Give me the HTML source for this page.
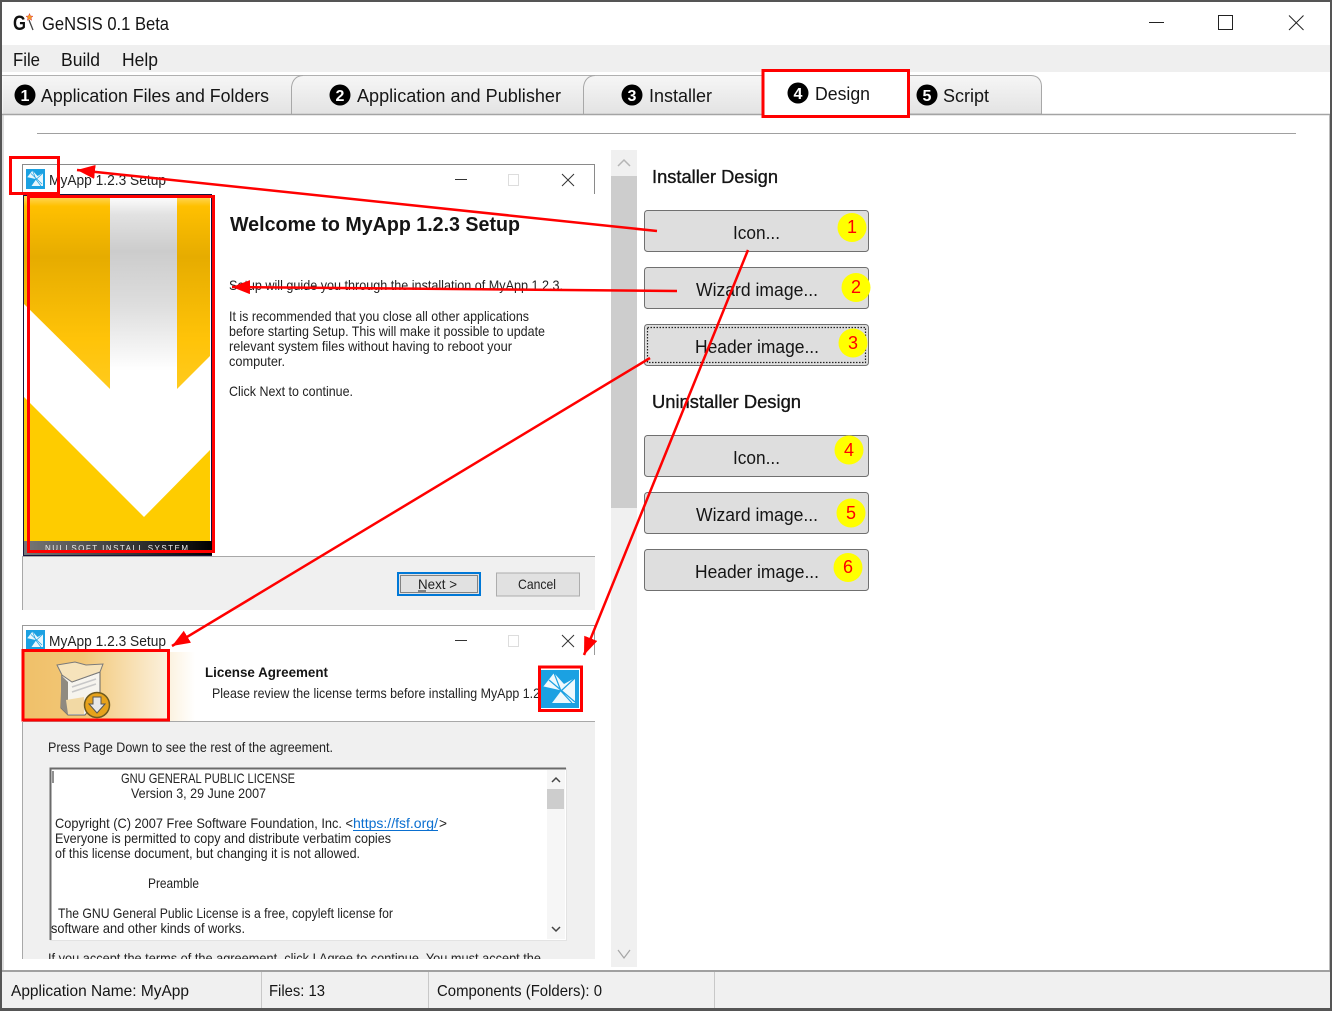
<!DOCTYPE html>
<html lang="en">
<head>
<meta charset="utf-8">
<title>GeNSIS 0.1 Beta</title>
<style>
html,body{margin:0;padding:0;background:#fff;width:1332px;height:1011px;overflow:hidden}
svg{display:block}
text{font-family:"Liberation Sans",sans-serif;fill:#151515}
.ui{font-size:18px}
.s{font-size:14px;fill:#222}
.r{font-size:18px;fill:#f00}
</style>
</head>
<body>
<svg width="1332" height="1011" viewBox="0 0 1332 1011" xmlns="http://www.w3.org/2000/svg">
<defs>
<linearGradient id="tab" x1="0" y1="0" x2="0" y2="1"><stop offset="0" stop-color="#f6f6f6"/><stop offset="1" stop-color="#e3e3e3"/></linearGradient>
<linearGradient id="yel" gradientUnits="userSpaceOnUse" x1="0" y1="196" x2="0" y2="400"><stop offset="0" stop-color="#ffd860"/><stop offset=".05" stop-color="#ffc000"/><stop offset=".3" stop-color="#e6ac00"/><stop offset=".7" stop-color="#ffc308"/><stop offset="1" stop-color="#ffcc22"/></linearGradient>
<linearGradient id="gry" gradientUnits="userSpaceOnUse" x1="0" y1="196" x2="0" y2="380"><stop offset="0" stop-color="#fff"/><stop offset=".1" stop-color="#e2e2e2"/><stop offset=".3" stop-color="#cccccc"/><stop offset=".6" stop-color="#dedede"/><stop offset=".95" stop-color="#fff"/></linearGradient>
<linearGradient id="foot" x1="0" y1="0" x2="1" y2="0"><stop offset="0" stop-color="#777"/><stop offset=".6" stop-color="#333"/><stop offset="1" stop-color="#000"/></linearGradient>
<linearGradient id="hdr" x1="0" y1="0" x2="1" y2="0"><stop offset="0" stop-color="#f0c069"/><stop offset=".35" stop-color="#f2c777"/><stop offset="1" stop-color="#ffffff"/></linearGradient>
<marker id="ah" markerUnits="userSpaceOnUse" markerWidth="20" markerHeight="14" refX="18" refY="7" orient="auto"><path d="M0 0L18 7L0 14Z" fill="#f00"/></marker>
<clipPath id="clipL"><rect x="3" y="116" width="608" height="843"/></clipPath>
<clipPath id="clipF"><rect x="24" y="541" width="188" height="11"/></clipPath>
</defs>

<!-- window chrome -->
<rect width="1332" height="1011" fill="#fff"/>
<rect y="45" x="2" width="1328" height="27" fill="#efefef"/>

<!-- title bar -->
<text x="13" y="30" font-size="21" font-weight="bold" textLength="13" lengthAdjust="spacingAndGlyphs" style="fill:#111">G</text>
<path d="M29 20L33 30" stroke="#444" stroke-width="1.3"/>
<path d="M29.500 13.500l1 2.500 2.500 .2-2 1.600.7 2.500-2.200-1.400-2.200 1.400.7-2.500-2-1.600 2.500-.2z" fill="#f4a020" stroke="#d33" stroke-width=".5"/>
<text class="ui" x="42" y="30" textLength="127" lengthAdjust="spacingAndGlyphs">GeNSIS 0.1 Beta</text>
<path d="M1149 22.500H1164" stroke="#222" stroke-width="1"/>
<rect x="1218.500" y="15.500" width="14" height="14" fill="none" stroke="#222" stroke-width="1"/>
<path d="M1289 15.500L1303.500 30M1303.500 15.500L1289 30" stroke="#222" stroke-width="1"/>

<!-- menu -->
<text class="ui" x="13" y="66" textLength="27" lengthAdjust="spacingAndGlyphs">File</text>
<text class="ui" x="61" y="66" textLength="39" lengthAdjust="spacingAndGlyphs">Build</text>
<text class="ui" x="122" y="66" textLength="36" lengthAdjust="spacingAndGlyphs">Help</text>

<!-- tabs -->
<path d="M2.500 114.500V75.500H760Q763 75.500 763 80V114.500H2.500Z" fill="url(#tab)"/>
<path d="M2 75.500H763" stroke="#b0b0b0" stroke-width="1"/>
<path d="M291.500 114V87Q293 76 303 75.500" fill="none" stroke="#a8a8a8" stroke-width="1"/>
<path d="M583.500 114V87Q585 76 595 75.500" fill="none" stroke="#a8a8a8" stroke-width="1"/>
<path d="M908 75.500H1031Q1041 76 1041.500 86V114H908Z" fill="url(#tab)" stroke="#a8a8a8" stroke-width="1"/>
<rect x="763" y="72" width="145" height="44" fill="#fff"/>
<path d="M2 114.500H763M908 114.500H1330" stroke="#a4a4a4" stroke-width="1.500"/>
<path d="M3 115V970" stroke="#bbb" stroke-width="1"/>
<path d="M1329.500 115V970" stroke="#bbb" stroke-width="1"/>

<circle cx="25" cy="95" r="10.500" fill="#000"/><text x="25" y="101" font-size="16" font-weight="bold" text-anchor="middle" style="fill:#fff">1</text>
<text class="ui" x="41" y="102" textLength="228" lengthAdjust="spacingAndGlyphs">Application Files and Folders</text>
<circle cx="340" cy="95" r="10.500" fill="#000"/><text x="340" y="101" font-size="16" font-weight="bold" text-anchor="middle" style="fill:#fff">2</text>
<text class="ui" x="357" y="102" textLength="204" lengthAdjust="spacingAndGlyphs">Application and Publisher</text>
<circle cx="632" cy="95" r="10.500" fill="#000"/><text x="632" y="101" font-size="16" font-weight="bold" text-anchor="middle" style="fill:#fff">3</text>
<text class="ui" x="649" y="102" textLength="63" lengthAdjust="spacingAndGlyphs">Installer</text>
<circle cx="798" cy="93" r="10.500" fill="#000"/><text x="798" y="99" font-size="16" font-weight="bold" text-anchor="middle" style="fill:#fff">4</text>
<text class="ui" x="815" y="100" textLength="55" lengthAdjust="spacingAndGlyphs">Design</text>
<circle cx="927" cy="95" r="10.500" fill="#000"/><text x="927" y="101" font-size="16" font-weight="bold" text-anchor="middle" style="fill:#fff">5</text>
<text class="ui" x="943" y="102" textLength="46" lengthAdjust="spacingAndGlyphs">Script</text>

<!-- separator -->
<rect x="37" y="133" width="1259" height="1" fill="#a0a0a0"/>

<!-- left preview -->
<g clip-path="url(#clipL)">
  <!-- window 1 -->
  <path d="M22.500 194V164.500H594.500V194" fill="none" stroke="#8a8a8a" stroke-width="1"/>
  <g transform="translate(26,169)">
    <rect width="19" height="20" fill="#1ba1e2"/>
    <path d="M6.500 1.500L11.500 7L17 4V17H5.500L10 10.500L1 8.500Z" fill="#e8f6fc"/>
    <path d="M1 8.500L10 10.500M6.500 1.500L10 10.500L15 17M5 4.500L16 15M17 4L10 10.500" stroke="#1ba1e2" stroke-width=".7" fill="none"/>
  </g>
  <text class="s" x="49" y="185" textLength="117" lengthAdjust="spacingAndGlyphs" style="font-size:15px">MyApp 1.2.3 Setup</text>
  <path d="M455 179.500H467" stroke="#333" stroke-width="1"/>
  <rect x="508.500" y="174.500" width="10" height="11" fill="none" stroke="#ddd" stroke-width="1"/>
  <path d="M562 174L574 186M574 174L562 186" stroke="#333" stroke-width="1"/>

  <!-- wizard bitmap -->
  <rect x="23" y="194" width="189" height="362" fill="#14143c"/>
  <rect x="24" y="196" width="187" height="345" fill="#fff"/>
  <rect x="110" y="196" width="67" height="190" fill="url(#gry)"/>
  <path d="M24 196H110V389L24 304Z" fill="url(#yel)"/>
  <path d="M177 196H210V356L177 389Z" fill="url(#yel)"/>
  <path d="M24 397L144 517L210 450V541H24Z" fill="#fecc00"/>
  <rect x="24" y="541" width="188" height="14" fill="url(#foot)"/>
  <text x="45" y="551" font-size="8" textLength="145" clip-path="url(#clipF)" style="fill:#eee;letter-spacing:2px">NULLSOFT INSTALL SYSTEM</text>

  <text x="230" y="231" font-size="20" font-weight="bold" textLength="290" lengthAdjust="spacingAndGlyphs">Welcome to MyApp 1.2.3 Setup</text>
  <text class="s" x="229" y="290" textLength="334" lengthAdjust="spacingAndGlyphs">Setup will guide you through the installation of MyApp 1.2.3.</text>
  <text class="s" x="229" y="321" textLength="300" lengthAdjust="spacingAndGlyphs">It is recommended that you close all other applications</text>
  <text class="s" x="229" y="336" textLength="316" lengthAdjust="spacingAndGlyphs">before starting Setup. This will make it possible to update</text>
  <text class="s" x="229" y="351" textLength="283" lengthAdjust="spacingAndGlyphs">relevant system files without having to reboot your</text>
  <text class="s" x="229" y="366" textLength="56" lengthAdjust="spacingAndGlyphs">computer.</text>
  <text class="s" x="229" y="396" textLength="124" lengthAdjust="spacingAndGlyphs">Click Next to continue.</text>

  <rect x="23" y="556" width="572" height="54" fill="#f0f0f0"/>
  <path d="M23 556.500H595" stroke="#a8a8a8" stroke-width="1"/>
  <path d="M22.500 556V610" stroke="#a8a8a8" stroke-width="1"/>
  <rect x="398" y="573" width="82" height="22" fill="#e1e1e1" stroke="#0078d7" stroke-width="2"/>
  <rect x="400.500" y="575.500" width="77" height="17" fill="none" stroke="#222" stroke-width="1" stroke-dasharray="1 1"/>
  <text class="s" x="418" y="589" textLength="39" lengthAdjust="spacingAndGlyphs">Next &gt;</text>
  <path d="M418 591H426" stroke="#222" stroke-width="1"/>
  <rect x="496.500" y="573" width="83" height="23" fill="#e1e1e1" stroke="#adadad" stroke-width="1"/>
  <text class="s" x="518" y="589" textLength="38" lengthAdjust="spacingAndGlyphs">Cancel</text>

  <!-- window 2 -->
  <path d="M22.500 650V625.500H594.500V655" fill="none" stroke="#9a9a9a" stroke-width="1"/>
  <g transform="translate(26,630)">
    <rect width="19" height="20" fill="#1ba1e2"/>
    <path d="M6.500 1.500L11.500 7L17 4V17H5.500L10 10.500L1 8.500Z" fill="#e8f6fc"/>
    <path d="M1 8.500L10 10.500M6.500 1.500L10 10.500L15 17M5 4.500L16 15M17 4L10 10.500" stroke="#1ba1e2" stroke-width=".7" fill="none"/>
  </g>
  <text class="s" x="49" y="646" textLength="117" lengthAdjust="spacingAndGlyphs" style="font-size:15px">MyApp 1.2.3 Setup</text>
  <path d="M455 640.500H467" stroke="#333" stroke-width="1"/>
  <rect x="508.500" y="635.500" width="10" height="11" fill="none" stroke="#ddd" stroke-width="1"/>
  <path d="M562 635L574 647M574 635L562 647" stroke="#333" stroke-width="1"/>

  <rect x="23" y="652" width="172" height="69" fill="url(#hdr)"/>
  <!-- box icon -->
  <path d="M62 675L72 682L100 672V696L85 715H68L61 708Z" fill="#f6f4ee" stroke="#666" stroke-width="1"/>
  <path d="M61 675V708L68 715V682Z" fill="#8f8a80"/>
  <path d="M57 665L75 662L86 665L103 664L100 672L72 682L62 675Z" fill="#f6e3bb" stroke="#7a7a7a" stroke-width="1"/>
  <path d="M66 700L84 697V714L68 714Z" fill="#f2d9a4"/>
  <path d="M72 687L96 679M72 692L96 684" stroke="#c8c8c8" stroke-width="1.500"/>
  <circle cx="97" cy="705" r="12.500" fill="#e6a21c" stroke="#6e5a20" stroke-width="1.500"/>
  <path d="M93 697H101V704H105L97 713L89 704H93Z" fill="#e8e8e8" stroke="#555" stroke-width="1"/>

  <text x="205" y="677" font-size="14" font-weight="bold" textLength="123" lengthAdjust="spacingAndGlyphs">License Agreement</text>
  <text class="s" x="212" y="698" textLength="328" lengthAdjust="spacingAndGlyphs">Please review the license terms before installing MyApp 1.2</text>

  <!-- blue logo -->
  <rect x="541" y="670" width="38" height="38" fill="#1ba1e2"/>
  <path d="M554 673L564 684L575 678V703H552L561 691L543 687Z" fill="#eef9fd"/>
  <path d="M543 687L561 691M554 673L561 691L572 703M549 680L575 702M575 678L561 691" stroke="#1ba1e2" stroke-width="1.200" fill="none"/>

  <rect x="23" y="722" width="572" height="240" fill="#f0f0f0"/>
  <path d="M23 721.500H595" stroke="#a8a8a8" stroke-width="1"/>
  <path d="M22.500 722V962" stroke="#a8a8a8" stroke-width="1"/>
  <text class="s" x="48" y="752" textLength="285" lengthAdjust="spacingAndGlyphs">Press Page Down to see the rest of the agreement.</text>

  <rect x="50" y="768" width="516" height="172" fill="#fff"/>
  <path d="M50 940.500H566.500V768" fill="none" stroke="#e3e3e3" stroke-width="1"/>
  <path d="M50.500 940V768.500H566" fill="none" stroke="#6a6a6a" stroke-width="2"/>
  <rect x="547" y="770" width="18" height="169" fill="#f6f6f6"/>
  <rect x="547" y="789" width="17" height="20" fill="#cdcdcd"/>
  <path d="M552 782L556 778L560 782M552 927L556 931L560 927" fill="none" stroke="#444" stroke-width="1.500"/>
  <path d="M53 771V783" stroke="#222" stroke-width="1"/>
  <text class="s" x="121" y="783" textLength="174" lengthAdjust="spacingAndGlyphs">GNU GENERAL PUBLIC LICENSE</text>
  <text class="s" x="131" y="798" textLength="135" lengthAdjust="spacingAndGlyphs">Version 3, 29 June 2007</text>
  <text class="s" x="55" y="828" textLength="298" lengthAdjust="spacingAndGlyphs">Copyright (C) 2007 Free Software Foundation, Inc. &lt;</text>
  <text class="s" x="353" y="828" textLength="85" lengthAdjust="spacingAndGlyphs" style="fill:#0a6fd0">https://fsf.org/</text>
  <path d="M353 830.500H438" stroke="#0a6fd0" stroke-width="1"/>
  <text class="s" x="439" y="828" textLength="8" lengthAdjust="spacingAndGlyphs">&gt;</text>
  <text class="s" x="55" y="843" textLength="336" lengthAdjust="spacingAndGlyphs">Everyone is permitted to copy and distribute verbatim copies</text>
  <text class="s" x="55" y="858" textLength="305" lengthAdjust="spacingAndGlyphs">of this license document, but changing it is not allowed.</text>
  <text class="s" x="148" y="888" textLength="51" lengthAdjust="spacingAndGlyphs">Preamble</text>
  <text class="s" x="58" y="918" textLength="335" lengthAdjust="spacingAndGlyphs">The GNU General Public License is a free, copyleft license for</text>
  <text class="s" x="51" y="933" textLength="194" lengthAdjust="spacingAndGlyphs">software and other kinds of works.</text>
  <text class="s" x="48" y="963" textLength="493" lengthAdjust="spacingAndGlyphs">If you accept the terms of the agreement, click I Agree to continue. You must accept the</text>
</g>

<!-- main scrollbar -->
<rect x="611" y="150" width="26" height="817" fill="#f0f0f0"/>
<rect x="611" y="176" width="26" height="332" fill="#cdcdcd"/>
<path d="M618 166L624 160L630 166" fill="none" stroke="#b5b5b5" stroke-width="1.500"/>
<path d="M618 950L624 958L630 950" fill="none" stroke="#a5a5a5" stroke-width="1.200"/>

<!-- right panel -->
<text class="ui" x="652" y="183" textLength="126" lengthAdjust="spacingAndGlyphs" style="stroke:#151515;stroke-width:.35">Installer Design</text>
<text class="ui" x="652" y="408" textLength="149" lengthAdjust="spacingAndGlyphs" style="stroke:#151515;stroke-width:.35">Uninstaller Design</text>

<g fill="#dedede" stroke="#707070" stroke-width="1">
  <rect x="644.500" y="210.500" width="224" height="41" rx="3"/>
  <rect x="644.500" y="267.500" width="224" height="41" rx="3"/>
  <rect x="644.500" y="324.500" width="224" height="41" rx="3"/>
  <rect x="644.500" y="435.500" width="224" height="41" rx="3"/>
  <rect x="644.500" y="492.500" width="224" height="41" rx="3"/>
  <rect x="644.500" y="549.500" width="224" height="41" rx="3"/>
</g>
<rect x="647.500" y="327.500" width="218" height="35" fill="none" stroke="#222" stroke-width="1.200" stroke-dasharray="1.500 1.500"/>

<text class="ui" x="733" y="239" textLength="47" lengthAdjust="spacingAndGlyphs">Icon...</text>
<text class="ui" x="696" y="296" textLength="122" lengthAdjust="spacingAndGlyphs">Wizard image...</text>
<text class="ui" x="695" y="353" textLength="124" lengthAdjust="spacingAndGlyphs">Header image...</text>
<text class="ui" x="733" y="464" textLength="47" lengthAdjust="spacingAndGlyphs">Icon...</text>
<text class="ui" x="696" y="521" textLength="122" lengthAdjust="spacingAndGlyphs">Wizard image...</text>
<text class="ui" x="695" y="578" textLength="124" lengthAdjust="spacingAndGlyphs">Header image...</text>

<g fill="#ffff00">
  <circle cx="852" cy="227.500" r="14.500"/>
  <circle cx="856" cy="287.500" r="14.500"/>
  <circle cx="853" cy="343" r="14.500"/>
  <circle cx="849" cy="450" r="14.500"/>
  <circle cx="851" cy="513" r="14.500"/>
  <circle cx="848" cy="567.500" r="14.500"/>
</g>
<text class="r" x="852" y="233" text-anchor="middle">1</text>
<text class="r" x="856" y="293" text-anchor="middle">2</text>
<text class="r" x="853" y="349" text-anchor="middle">3</text>
<text class="r" x="849" y="456" text-anchor="middle">4</text>
<text class="r" x="851" y="519" text-anchor="middle">5</text>
<text class="r" x="848" y="573" text-anchor="middle">6</text>

<!-- status bar -->
<rect x="2" y="972" width="1328" height="36" fill="#f0f0f0"/>
<rect x="2" y="970" width="1328" height="2" fill="#a0a0a0"/>
<rect x="261" y="972" width="1" height="36" fill="#c8c8c8"/>
<rect x="428" y="972" width="1" height="36" fill="#c8c8c8"/>
<rect x="714" y="972" width="1" height="36" fill="#c8c8c8"/>
<text x="11" y="996" font-size="16" textLength="178" lengthAdjust="spacingAndGlyphs">Application Name:  MyApp</text>
<text x="269" y="996" font-size="16" textLength="56" lengthAdjust="spacingAndGlyphs">Files:  13</text>
<text x="437" y="996" font-size="16" textLength="165" lengthAdjust="spacingAndGlyphs">Components (Folders):  0</text>

<!-- window border -->
<path d="M1 1011V1H1331V1011" fill="none" stroke="#555" stroke-width="2"/>
<rect x="0" y="1008" width="1332" height="3" fill="#555"/>

<!-- red annotations -->
<g fill="none" stroke="#f00" stroke-width="3">
  <rect x="10.500" y="157.500" width="48" height="36"/>
  <rect x="28.500" y="196.500" width="185" height="355"/>
  <rect x="763" y="70.500" width="145.500" height="46"/>
  <rect x="23" y="650.500" width="145.500" height="69.500"/>
  <rect x="539.500" y="667" width="42" height="43.500"/>
</g>
<g stroke="#f00" stroke-width="2.500" fill="none">
  <line x1="657" y1="231" x2="77" y2="170" marker-end="url(#ah)"/>
  <line x1="677" y1="291" x2="232" y2="287" marker-end="url(#ah)"/>
  <line x1="650" y1="358" x2="172" y2="646" marker-end="url(#ah)"/>
  <line x1="748" y1="250" x2="584" y2="655" marker-end="url(#ah)"/>
</g>
</svg>
</body>
</html>
